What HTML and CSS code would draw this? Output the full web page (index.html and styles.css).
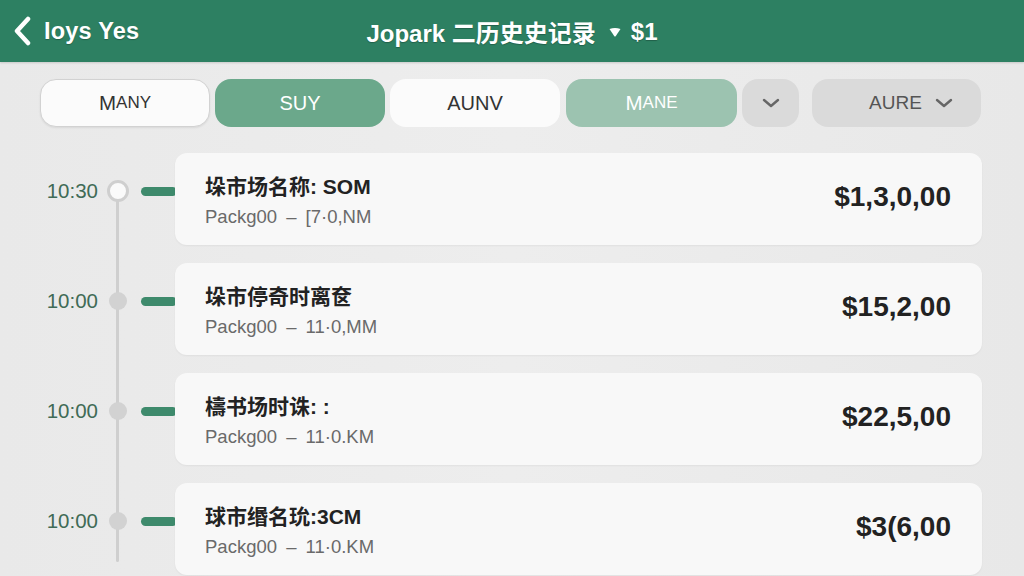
FILE: index.html
```html
<!DOCTYPE html>
<html lang="zh">
<head>
<meta charset="utf-8">
<title>History</title>
<link rel="stylesheet" href="styles.css">
</head>
<body>
<header class="topbar">
  <div class="back">
    <svg class="back-icon" width="22" height="30" viewBox="0 0 22 30"><path d="M16 3 L5 15 L16 27" fill="none" stroke="#fff" stroke-width="4.5" stroke-linecap="round" stroke-linejoin="round"/></svg>
    <span class="back-label">Ioys Yes</span>
  </div>
  <div class="title">
    <span>Jopark 二历史史记录</span>
    <svg class="caret" width="14" height="12" viewBox="0 0 14 12"><path d="M1.5 3 Q7 1 12.5 3 L7.8 10 Q7 11 6.2 10 Z" fill="#fff"/></svg>
    <span>$1</span>
  </div>
  <div></div>
</header>

<nav class="tabs">
  <div class="tab tab-white tab-border"><span class="cap">M</span><span class="sc">ANY</span></div>
  <div class="tab tab-green">SUY</div>
  <div class="tab tab-white">AUNV</div>
  <div class="tab tab-light"><span class="cap">M</span><span class="sc">ANE</span></div>
  <div class="tab tab-gray tab-small">
    <svg width="20" height="14" viewBox="0 0 20 14"><path d="M3 4 L10 10 L17 4" fill="none" stroke="#666" stroke-width="2.4" stroke-linecap="round" stroke-linejoin="round"/></svg>
  </div>
  <div class="tab tab-gray tab-aure">
    <span>AURE</span>
    <svg width="20" height="14" viewBox="0 0 20 14"><path d="M3 4 L10 10 L17 4" fill="none" stroke="#666" stroke-width="2.4" stroke-linecap="round" stroke-linejoin="round"/></svg>
  </div>
</nav>

<main class="timeline">
  <div class="rail"></div>
  <div class="row">
    <div class="marker">
      <span class="time">10:30</span>
      <span class="dot dot-ring"></span>
      <span class="bar"></span>
    </div>
    <div class="card">
      <div class="info">
        <div class="name">垛市场名称: SOM</div>
        <div class="sub">Packg00 – [7·0,NM</div>
      </div>
      <div class="price">$1,3,0,00</div>
    </div>
  </div>
  <div class="row">
    <div class="marker">
      <span class="time">10:00</span>
      <span class="dot"></span>
      <span class="bar"></span>
    </div>
    <div class="card">
      <div class="info">
        <div class="name">垛市停奇时离奁</div>
        <div class="sub">Packg00 – 11·0,MM</div>
      </div>
      <div class="price">$15,2,00</div>
    </div>
  </div>
  <div class="row">
    <div class="marker">
      <span class="time">10:00</span>
      <span class="dot"></span>
      <span class="bar"></span>
    </div>
    <div class="card">
      <div class="info">
        <div class="name">檮书场时诛: :</div>
        <div class="sub">Packg00 – 11·0.KM</div>
      </div>
      <div class="price">$22,5,00</div>
    </div>
  </div>
  <div class="row">
    <div class="marker">
      <span class="time">10:00</span>
      <span class="dot"></span>
      <span class="bar"></span>
    </div>
    <div class="card">
      <div class="info">
        <div class="name">球市缗名玧:3CM</div>
        <div class="sub">Packg00 – 11·0.KM</div>
      </div>
      <div class="price">$3(6,00</div>
    </div>
  </div>
</main>
</body>
</html>
```

FILE: styles.css
```css
* { box-sizing: border-box; }
html, body { margin: 0; padding: 0; }
body {
  width: 1024px;
  height: 576px;
  overflow: hidden;
  background: linear-gradient(90deg, #e9e9e9 0%, #ededed 50%, #e8e8e8 100%);
  font-family: "Liberation Sans", Arial, "Noto Sans CJK SC", sans-serif;
  color: #222;
}

.topbar {
  height: 62px;
  background: #2d8062;
  display: grid;
  grid-template-columns: 1fr auto 1fr;
  align-items: center;
  color: #fff;
  box-shadow: 0 1px 2px rgba(0,0,0,0.15);
}
.back {
  display: flex;
  align-items: center;
  padding-left: 12px;
  gap: 10px;
}
.back-icon { display: block; }
.back-label {
  font-size: 23.5px;
  font-weight: bold;
  letter-spacing: 0.2px;
  text-shadow: 0 1px 1px rgba(0,0,0,0.25);
}
.title {
  display: flex;
  align-items: center;
  gap: 9px;
  font-size: 24px;
  font-weight: bold;
  text-shadow: 0 1px 1px rgba(0,0,0,0.25);
  padding-top: 1px;
}
.caret { display: block; margin-left: 3px; }

.tabs {
  display: flex;
  align-items: center;
  padding-left: 40px;
  margin-top: 17px;
  gap: 5px;
  height: 48px;
}
.tab {
  height: 48px;
  width: 170px;
  flex: none;
  border-radius: 16px;
  display: flex;
  align-items: center;
  justify-content: center;
  font-size: 20px;
  color: #333;
}
.tab-white { background: #fbfbfb; }
.tab-border { border: 1.5px solid #d2d2d2; box-shadow: 0 1px 2px rgba(0,0,0,0.08); }
.tab-green { background: #6ba88b; color: #fff; }
.tab-light { background: #9cc3b0; color: #fff; width: 171px; margin-left: 1px; }
.tab-gray { background: #dadada; color: #555; }
.tab-small { width: 57px; }
.tab-aure { width: 169px; margin-left: 8px; gap: 12px; padding-left: 30px; font-size: 19px; }
.tab svg { display: block; }
.cap { font-size: 20.5px; }
.sc { font-size: 17px; }

.timeline {
  position: relative;
  margin-top: 26px;
  display: flex;
  flex-direction: column;
  gap: 18px;
  padding-right: 42px;
}
.rail {
  position: absolute;
  left: 116px;
  top: 37px;
  height: 372px;
  width: 3px;
  background: #cfcfcf;
  border-radius: 2px;
}
.row {
  display: flex;
  align-items: flex-start;
  height: 92px;
}
.marker {
  width: 175px;
  flex: none;
  display: flex;
  align-items: center;
  height: 20px;
  margin-top: 28px;
  position: relative;
}
.marker > * { flex: none; }
.time {
  width: 98px;
  text-align: right;
  font-size: 20.5px;
  color: #3f6b56;
}
.dot {
  width: 18px;
  height: 18px;
  border-radius: 50%;
  background: #d2d2d2;
  margin-left: 11px;
  position: relative;
  z-index: 1;
}
.dot-ring {
  width: 22px;
  height: 22px;
  margin-left: 9px;
  margin-right: -2px;
  background: #fafafa;
  border: 3px solid #cfcfcf;
}
.bar {
  width: 36px;
  height: 9px;
  border-radius: 5px;
  background: #3e8a6c;
  margin-left: 14px;
}
.card {
  flex: 1;
  height: 92px;
  background: #f8f8f8;
  border-radius: 12px;
  display: flex;
  align-items: center;
  justify-content: space-between;
  padding: 0 31px 0 30px;
  position: relative;
  z-index: 2;
  box-shadow: 0 1px 2px rgba(0,0,0,0.05);
}
.info { margin-top: 3px; }
.name {
  font-size: 21px;
  font-weight: bold;
  color: #222;
  line-height: 26px;
}
.sub {
  font-size: 18.5px;
  color: #6a6a6a;
  margin-top: 6px;
  word-spacing: 4px;
}
.price {
  font-size: 28px;
  font-weight: bold;
  color: #222;
  margin-top: -4px;
}
```
